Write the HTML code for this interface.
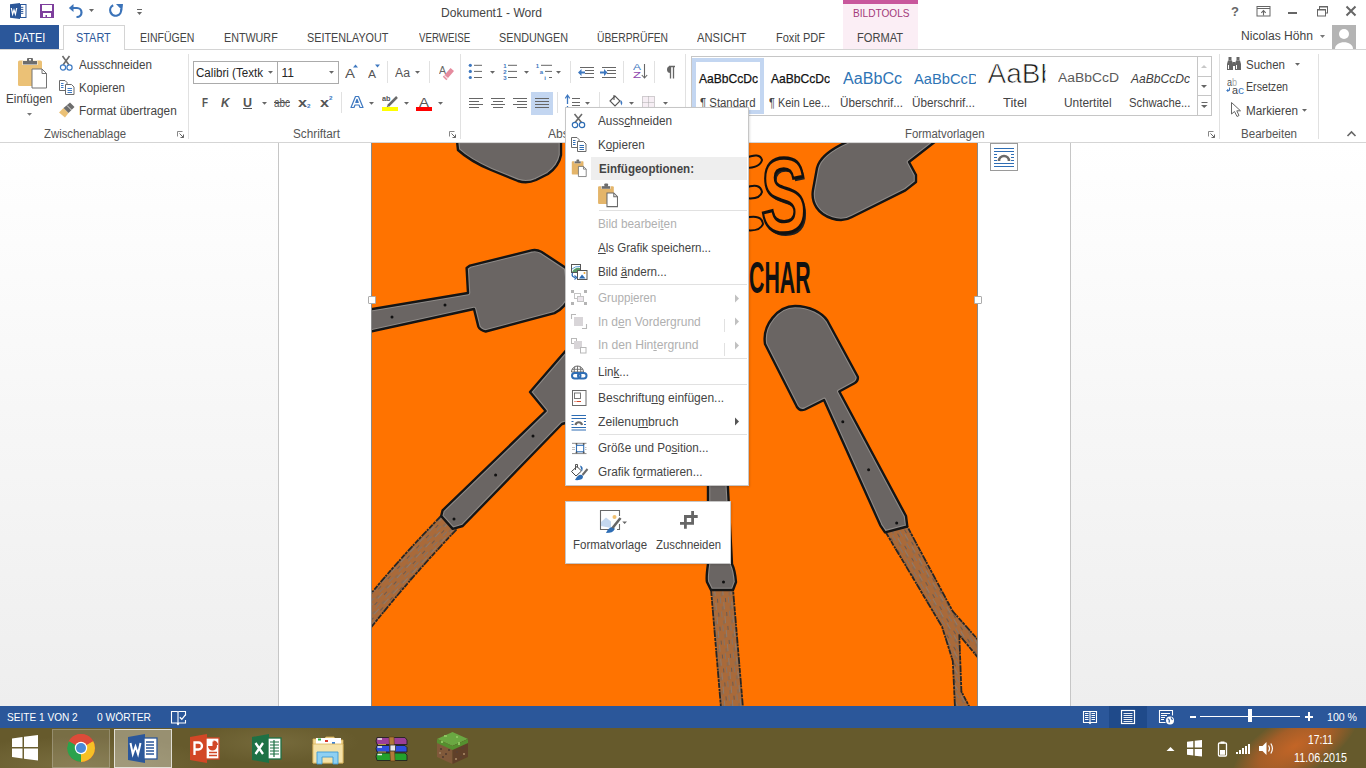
<!DOCTYPE html>
<html><head><meta charset="utf-8">
<style>
*{box-sizing:border-box}
html,body{margin:0;padding:0}
body{width:1366px;height:768px;overflow:hidden;position:relative;background:#fff;font-family:"Liberation Sans",sans-serif;color:#444}
.a{position:absolute}
.t{position:absolute;white-space:nowrap;line-height:1;font-size:12px;transform-origin:0 0}
.t u{text-decoration:underline;text-underline-offset:1px}
svg{position:absolute;overflow:visible}
</style></head><body>
<!-- p1 -->
<svg style="left:9px;top:2px;" width="20" height="19" viewBox="0 0 20 19"><path d="M1 2.2 L11 1 L11 17 L1 15.8 Z" fill="#2b579a"/><rect x="11.5" y="2.5" width="5.5" height="13" fill="#fff" stroke="#2b579a" stroke-width="1"/><path d="M11 5.3h3.3M11 7.4h3.3M11 9.4h3.3M11 11.3h3.3" stroke="#2b579a" stroke-width="1"/><path d="M2.3 6 L3.6 12.2 L5 8 L6.4 12.2 L7.7 6" fill="none" stroke="#fff" stroke-width="1.2"/></svg>
<svg style="left:40px;top:4px;" width="14" height="14" viewBox="0 0 14 14"><path d="M0 0H14V14H0Z" fill="#7e3f9d"/><rect x="2" y="1" width="10" height="6" fill="#fff"/><rect x="3" y="9" width="8" height="4" fill="#fff"/><rect x="5.5" y="11" width="1.5" height="2" fill="#7e3f9d"/></svg>
<svg style="left:68px;top:3px;" width="16" height="15" viewBox="0 0 16 15"><path d="M2 5 H9 A4.5 4.5 0 0 1 9 14 H8.5" fill="none" stroke="#3b73b9" stroke-width="2.2"/><path d="M0.8 5 L5.5 1 L5.5 9 Z" fill="#3b73b9"/></svg>
<svg style="left:89px;top:9px;" width="6" height="4" viewBox="0 0 6 4"><path d="M0 0H5L2.5 3Z" fill="#666"/></svg>
<svg style="left:108px;top:3px;" width="16" height="15" viewBox="0 0 16 15"><path d="M5.2 2.3 A5.5 5.5 0 1 0 13 6" fill="none" stroke="#3b73b9" stroke-width="2.2"/><path d="M8 1 L15 1 L14.3 7.5 Z" fill="#3b73b9"/></svg>
<svg style="left:137px;top:8px;" width="6" height="8" viewBox="0 0 6 8"><path d="M0 1.5H5" stroke="#666" stroke-width="1"/><path d="M0 4H5L2.5 7Z" fill="#666"/></svg>
<div class="t" style="left:441px;top:7px;font-size:12px;color:#444;transform:scaleX(1.005);">Dokument1 - Word</div>
<div class="a" style="left:843px;top:0px;width:75px;height:4px;background:#c8579c;"></div>
<div class="a" style="left:843px;top:4px;width:75px;height:45px;background:#fbeef5;"></div>
<div class="t" style="left:852.5px;top:8px;font-size:11px;color:#a33b7b;transform:scaleX(0.918);">BILDTOOLS</div>
<svg style="left:1230px;top:5px;" width="10" height="12" viewBox="0 0 10 12"><text x="5" y="10.8" text-anchor="middle" font-family="Liberation Sans" font-weight="700" font-size="13" fill="#666">?</text></svg>
<svg style="left:1256px;top:5px;" width="15" height="12" viewBox="0 0 15 12"><rect x="1" y="1.5" width="13" height="9.5" fill="none" stroke="#666" stroke-width="1"/><path d="M1 3.5H14" stroke="#666"/><path d="M7.5 10.5V6M5.3 7.8 L7.5 5.6 L9.7 7.8" fill="none" stroke="#666" stroke-width="1.1"/></svg>
<div class="a" style="left:1288px;top:12px;width:9px;height:2px;background:#666;"></div>
<svg style="left:1316px;top:5px;" width="12" height="12" viewBox="0 0 12 12"><rect x="3.5" y="1.5" width="8" height="6.5" fill="none" stroke="#666"/><rect x="3.5" y="1" width="8" height="1.5" fill="#666"/><rect x="1.5" y="4.5" width="8" height="6.5" fill="#fff" stroke="#666"/><rect x="1.5" y="4" width="8" height="1.5" fill="#666"/></svg>
<svg style="left:1345px;top:5px;" width="12" height="12" viewBox="0 0 12 12"><path d="M1.5 1.5 L10.5 10.5 M10.5 1.5 L1.5 10.5" stroke="#666" stroke-width="2"/></svg>
<div class="a" style="left:0px;top:25px;width:59px;height:25px;background:#2b579a;"></div>
<div class="a" style="left:63px;top:25px;width:62px;height:25px;background:#fff;border:1px solid #d4d4d4;border-bottom:none;box-sizing:border-box"></div>
<div class="a" style="left:0px;top:49px;width:63px;height:1px;background:#d4d4d4;"></div>
<div class="a" style="left:125px;top:49px;width:1241px;height:1px;background:#d4d4d4;"></div>
<div class="a" style="left:843px;top:49px;width:75px;height:1px;background:#d4d4d4;"></div>
<div class="t" style="left:13.5px;top:32px;font-size:12px;color:#fff;transform:scaleX(0.906);">DATEI</div>
<div class="t" style="left:76px;top:32px;font-size:12px;color:#2b579a;transform:scaleX(0.908);">START</div>
<div class="t" style="left:140.3px;top:32px;font-size:12px;color:#444;transform:scaleX(0.876);">EINFÜGEN</div>
<div class="t" style="left:224.3px;top:32px;font-size:12px;color:#444;transform:scaleX(0.895);">ENTWURF</div>
<div class="t" style="left:307px;top:32px;font-size:12px;color:#444;transform:scaleX(0.900);">SEITENLAYOUT</div>
<div class="t" style="left:418.5px;top:32px;font-size:12px;color:#444;transform:scaleX(0.811);">VERWEISE</div>
<div class="t" style="left:499px;top:32px;font-size:12px;color:#444;transform:scaleX(0.900);">SENDUNGEN</div>
<div class="t" style="left:597px;top:32px;font-size:12px;color:#444;transform:scaleX(0.859);">ÜBERPRÜFEN</div>
<div class="t" style="left:696.7px;top:32px;font-size:12px;color:#444;transform:scaleX(0.936);">ANSICHT</div>
<div class="t" style="left:776px;top:32px;font-size:12px;color:#444;transform:scaleX(0.919);">Foxit PDF</div>
<div class="t" style="left:856.5px;top:32px;font-size:12px;color:#444;transform:scaleX(0.926);">FORMAT</div>
<div class="t" style="left:1241px;top:30px;font-size:12px;color:#444;transform:scaleX(1.009);">Nicolas Höhn</div>
<svg style="left:1320px;top:35px;" width="6" height="4" viewBox="0 0 6 4"><path d="M0 0H5L2.5 3Z" fill="#777"/></svg>
<svg style="left:1332px;top:25px;" width="24" height="24" viewBox="0 0 24 24"><rect width="24" height="24" fill="#b4b4b4"/><circle cx="12" cy="9" r="5" fill="#fff"/><path d="M3 24 C3 15 21 15 21 24Z" fill="#fff"/><path d="M6 24 C6 18 18 18 18 24" fill="#fff"/></svg>
<!-- p2 -->
<div class="a" style="left:188px;top:54px;width:1px;height:85px;background:#e1e1e1;"></div>
<div class="a" style="left:460px;top:54px;width:1px;height:85px;background:#e1e1e1;"></div>
<div class="a" style="left:685px;top:54px;width:1px;height:85px;background:#e1e1e1;"></div>
<div class="a" style="left:1219px;top:54px;width:1px;height:85px;background:#e1e1e1;"></div>
<div class="a" style="left:1318px;top:54px;width:1px;height:85px;background:#e1e1e1;"></div>
<div class="t" style="left:44px;top:128px;font-size:12px;color:#555;transform:scaleX(0.946);">Zwischenablage</div>
<div class="t" style="left:293px;top:128px;font-size:12px;color:#555;transform:scaleX(0.979);">Schriftart</div>
<div class="t" style="left:548px;top:128px;font-size:12px;color:#555;transform:scaleX(1.009);">Absatz</div>
<div class="t" style="left:905px;top:128px;font-size:12px;color:#555;transform:scaleX(0.947);">Formatvorlagen</div>
<div class="t" style="left:1241px;top:128px;font-size:12px;color:#555;transform:scaleX(0.965);">Bearbeiten</div>
<svg style="left:177px;top:131px;" width="8" height="8" viewBox="0 0 8 8"><path d="M0.5 0.5H5.5M0.5 0.5V5.5" stroke="#888" fill="none"/><path d="M2.5 2.5L6.5 6.5M3.5 6.5H6.5V3.5" stroke="#666" fill="none" stroke-width="1"/></svg>
<svg style="left:449px;top:131px;" width="8" height="8" viewBox="0 0 8 8"><path d="M0.5 0.5H5.5M0.5 0.5V5.5" stroke="#888" fill="none"/><path d="M2.5 2.5L6.5 6.5M3.5 6.5H6.5V3.5" stroke="#666" fill="none" stroke-width="1"/></svg>
<svg style="left:1208px;top:131px;" width="8" height="8" viewBox="0 0 8 8"><path d="M0.5 0.5H5.5M0.5 0.5V5.5" stroke="#888" fill="none"/><path d="M2.5 2.5L6.5 6.5M3.5 6.5H6.5V3.5" stroke="#666" fill="none" stroke-width="1"/></svg>
<svg style="left:1346px;top:130px;" width="12" height="8" viewBox="0 0 12 8"><path d="M1.5 6 L5.5 2 L9.5 6" fill="none" stroke="#666" stroke-width="1.6"/></svg>
<svg style="left:16px;top:56px;" width="32" height="34" viewBox="0 0 32 34"><rect x="2" y="4.5" width="24" height="25.5" rx="1.5" fill="#ebc176"/><rect x="6.5" y="4.5" width="15" height="4.5" fill="#fff"/><rect x="7" y="5" width="14" height="3.5" fill="#6d6d6d"/><rect x="11" y="2" width="6" height="4" rx="1" fill="#6d6d6d"/><rect x="13" y="3" width="2" height="1.5" fill="#fff"/><path d="M16 13 H26 L30.5 17.5 V32 H16 Z" fill="#fff" stroke="#737373" stroke-width="1"/><path d="M26 13 V17.5 H30.5" fill="none" stroke="#737373" stroke-width="1"/></svg>
<div class="t" style="left:6.4px;top:93px;font-size:12px;color:#444;transform:scaleX(0.975);">Einfügen</div>
<svg style="left:27px;top:113px;" width="6" height="4" viewBox="0 0 6 4"><path d="M0 0H5L2.5 2.8Z" fill="#777"/></svg>
<svg style="left:59px;top:55px;" width="17" height="17" viewBox="0 0 17 17"><path d="M3.5 1 L10 10 M10.5 1 L4 10" stroke="#6a6a6a" stroke-width="1.6"/><circle cx="4" cy="12.5" r="2.6" fill="none" stroke="#3e7bc4" stroke-width="1.2"/><circle cx="10.5" cy="12.5" r="2.6" fill="none" stroke="#3e7bc4" stroke-width="1.2"/></svg>
<div class="t" style="left:78.6px;top:59px;font-size:12px;color:#444;transform:scaleX(0.968);">Ausschneiden</div>
<svg style="left:58px;top:79px;" width="18" height="17" viewBox="0 0 18 17"><path d="M1.5 1.5H7L9 3.5V11.5H1.5Z" fill="#fff" stroke="#6a6a6a"/><path d="M3 4.5H5.5M3 6.5H5.5M3 8.5H5.5" stroke="#3e7bc4"/><path d="M7.5 5.5H13.5L16 8V15.5H7.5Z" fill="#fff" stroke="#6a6a6a"/><path d="M9.5 9.5H14M9.5 11.5H14M9.5 13.5H14" stroke="#3e7bc4"/></svg>
<div class="t" style="left:78.6px;top:82px;font-size:12px;color:#444;transform:scaleX(0.956);">Kopieren</div>
<svg style="left:58px;top:102px;" width="18" height="17" viewBox="0 0 18 17"><path d="M1 10.5 L5.5 6 L10.5 11 L7 15.5 Z" fill="#ebc176"/><path d="M5.5 6 L12 0.5 L16.5 5 L10.5 11 Z" fill="#6d6d6d"/><path d="M9 3.5 L13.5 8" stroke="#fff" stroke-width="0.8"/></svg>
<div class="t" style="left:78.6px;top:105px;font-size:12px;color:#444;transform:scaleX(0.983);">Format übertragen</div>
<div class="a" style="left:193px;top:61px;width:146px;height:23px;background:#fff;border:1px solid #ababab"></div>
<div class="a" style="left:277px;top:61px;width:1px;height:23px;background:#ababab;"></div>
<div class="t" style="left:196.3px;top:67px;font-size:12px;color:#262626;transform:scaleX(0.966);">Calibri (Textk</div>
<svg style="left:268px;top:71px;" width="6" height="4" viewBox="0 0 6 4"><path d="M0 0H5L2.5 2.8Z" fill="#666"/></svg>
<div class="t" style="left:281.5px;top:67px;font-size:12px;color:#262626;">11</div>
<svg style="left:329px;top:71px;" width="6" height="4" viewBox="0 0 6 4"><path d="M0 0H5L2.5 2.8Z" fill="#666"/></svg>
<div class="t" style="left:345px;top:67px;font-size:13px;color:#555;transform:scaleX(1.153);">A</div>
<svg style="left:353px;top:64px;" width="6" height="4" viewBox="0 0 6 4"><path d="M0 3.5H5L2.5 0.5Z" fill="#3e78c0"/></svg>
<div class="t" style="left:368px;top:70px;font-size:10px;color:#555;transform:scaleX(1.199);">A</div>
<svg style="left:375px;top:64px;" width="6" height="4" viewBox="0 0 6 4"><path d="M0 0.5H5L2.5 3.5Z" fill="#3e78c0"/></svg>
<div class="a" style="left:387px;top:61px;width:1px;height:22px;background:#e1e1e1;"></div>
<div class="t" style="left:395px;top:67px;font-size:12px;color:#555;transform:scaleX(1.022);">Aa</div>
<svg style="left:415px;top:71px;" width="6" height="4" viewBox="0 0 6 4"><path d="M0 0H5L2.5 2.8Z" fill="#666"/></svg>
<div class="a" style="left:429px;top:61px;width:1px;height:22px;background:#e1e1e1;"></div>
<div class="t" style="left:438.5px;top:66px;font-size:10px;color:#666;transform:scaleX(1.049);">A</div>
<svg style="left:440px;top:65px;" width="14" height="16" viewBox="0 0 14 16"><path d="M4.5 10 L10.5 3 L14 6 L8 13 Z" fill="#e58b9e"/><path d="M3.5 11 L7 14.5" stroke="#e58b9e" stroke-width="2"/><path d="M4 10.5 L7.5 14" stroke="#fff" stroke-width="0.7"/></svg>
<div class="t" style="left:201.5px;top:97px;font-size:12px;color:#555;font-weight:700;transform:scaleX(0.819);">F</div>
<div class="t" style="left:221px;top:97px;font-size:12px;color:#555;font-weight:700;font-style:italic;transform:scaleX(0.981);">K</div>
<div class="t" style="left:243px;top:97px;font-size:12px;color:#555;font-weight:700;transform:scaleX(1.039);">U</div>
<div class="a" style="left:243px;top:108px;width:9px;height:1px;background:#555;"></div>
<svg style="left:262px;top:102px;" width="6" height="4" viewBox="0 0 6 4"><path d="M0 0H5L2.5 2.8Z" fill="#666"/></svg>
<div class="t" style="left:274px;top:97px;font-size:12px;color:#555;transform:scaleX(0.827);">abc</div>
<div class="a" style="left:274px;top:102px;width:16px;height:1px;background:#555;"></div>
<div class="t" style="left:298px;top:96px;font-size:13px;color:#555;font-weight:700;transform:scaleX(1.245);">x</div>
<div class="t" style="left:307px;top:103px;font-size:6px;color:#3e78c0;font-weight:700;transform:scaleX(1.049);">2</div>
<div class="t" style="left:320px;top:96px;font-size:13px;color:#555;font-weight:700;transform:scaleX(1.245);">x</div>
<div class="t" style="left:329px;top:95px;font-size:6px;color:#3e78c0;font-weight:700;transform:scaleX(1.049);">2</div>
<div class="a" style="left:341px;top:92px;width:1px;height:21px;background:#e1e1e1;"></div>
<svg style="left:349px;top:95px;" width="16" height="14" viewBox="0 0 16 14"><path d="M2 12.5 L6.5 1.5 H9.5 L14 12.5 H11 L10 10 H6 L5 12.5 Z M6.8 7.5 H9.2 L8 4.3 Z" fill="#fff" stroke="#3e78c0" stroke-width="1.2" stroke-linejoin="round"/></svg>
<svg style="left:369px;top:102px;" width="6" height="4" viewBox="0 0 6 4"><path d="M0 0H5L2.5 2.8Z" fill="#666"/></svg>
<div class="t" style="left:382px;top:95px;font-size:8px;color:#555;font-weight:700;transform:scaleX(0.910);">ab</div>
<svg style="left:385px;top:95px;" width="14" height="12" viewBox="0 0 14 12"><path d="M3 11 L12 2" stroke="#6a6a6a" stroke-width="2.5"/><path d="M2 12 L4 9.5" stroke="#6a6a6a" stroke-width="1"/></svg>
<div class="a" style="left:382px;top:107px;width:16px;height:4px;background:#ffff00;"></div>
<svg style="left:404px;top:102px;" width="6" height="4" viewBox="0 0 6 4"><path d="M0 0H5L2.5 2.8Z" fill="#666"/></svg>
<div class="t" style="left:419px;top:96px;font-size:13px;color:#555;transform:scaleX(1.153);">A</div>
<div class="a" style="left:416px;top:107px;width:16px;height:4px;background:#ff0000;"></div>
<svg style="left:438px;top:102px;" width="6" height="4" viewBox="0 0 6 4"><path d="M0 0H5L2.5 2.8Z" fill="#666"/></svg>
<svg style="left:467px;top:62px;" width="18" height="18" viewBox="0 0 18 18"><circle cx="3.3" cy="3.3" r="1.6" fill="#3e78c0"/><circle cx="3.3" cy="9.4" r="1.6" fill="#3e78c0"/><circle cx="3.3" cy="15.5" r="1.6" fill="#3e78c0"/><path d="M7 3.3H15M7 9.4H15M7 15.5H15" stroke="#666" stroke-width="1"/></svg>
<svg style="left:490px;top:71px;" width="6" height="4" viewBox="0 0 6 4"><path d="M0 0H5L2.5 2.8Z" fill="#666"/></svg>
<svg style="left:501px;top:62px;" width="18" height="18" viewBox="0 0 18 18"><text x="4" y="6" text-anchor="middle" font-family="Liberation Sans" font-weight="700" font-size="6" fill="#3e78c0">1</text><text x="4" y="12" text-anchor="middle" font-family="Liberation Sans" font-weight="700" font-size="6" fill="#3e78c0">2</text><text x="4" y="18" text-anchor="middle" font-family="Liberation Sans" font-weight="700" font-size="6" fill="#3e78c0">3</text><path d="M7 3.3H16M7 9.4H16M7 15.5H16" stroke="#666" stroke-width="1"/></svg>
<svg style="left:524px;top:71px;" width="6" height="4" viewBox="0 0 6 4"><path d="M0 0H5L2.5 2.8Z" fill="#666"/></svg>
<svg style="left:534px;top:62px;" width="20" height="18" viewBox="0 0 20 18"><text x="3.5" y="6" text-anchor="middle" font-family="Liberation Sans" font-weight="700" font-size="6" fill="#3e78c0">1</text><text x="7.5" y="11.5" text-anchor="middle" font-family="Liberation Sans" font-weight="700" font-size="6" fill="#3e78c0">a</text><text x="11" y="17.5" text-anchor="middle" font-family="Liberation Sans" font-weight="700" font-size="6" fill="#3e78c0">i</text><path d="M7 3.3H18M11 9.4H18M15 15.5H18" stroke="#666" stroke-width="1"/></svg>
<svg style="left:556px;top:71px;" width="6" height="4" viewBox="0 0 6 4"><path d="M0 0H5L2.5 2.8Z" fill="#666"/></svg>
<div class="a" style="left:570px;top:61px;width:1px;height:22px;background:#e1e1e1;"></div>
<svg style="left:577px;top:64px;" width="18" height="15" viewBox="0 0 18 15"><path d="M3 3.5H17M8 6.5H17M8 9.5H17M3 13.5H17" stroke="#666" stroke-width="1"/><path d="M1 8.5 L4.5 5 V7.5 H8 V9.5 H4.5 V12 Z" fill="#3e78c0"/></svg>
<svg style="left:599px;top:64px;" width="18" height="15" viewBox="0 0 18 15"><path d="M3 3.5H17M8 6.5H17M8 9.5H17M3 13.5H17" stroke="#666" stroke-width="1"/><path d="M8.5 8.5 L5 5 V7.5 H1 V9.5 H5 V12 Z" fill="#3e78c0"/></svg>
<div class="a" style="left:623px;top:61px;width:1px;height:22px;background:#e1e1e1;"></div>
<div class="t" style="left:633px;top:63px;font-size:9px;color:#3e78c0;transform:scaleX(1.333);">A</div>
<div class="t" style="left:633px;top:71px;font-size:9px;color:#8e44ad;transform:scaleX(1.455);">Z</div>
<svg style="left:641px;top:63px;" width="8" height="17" viewBox="0 0 8 17"><path d="M3.5 1V15M0.8 12 L3.5 15 L6.2 12" fill="none" stroke="#666" stroke-width="1.1"/></svg>
<div class="a" style="left:654px;top:61px;width:1px;height:22px;background:#e1e1e1;"></div>
<svg style="left:663px;top:65px;" width="13" height="14" viewBox="0 0 13 14"><path d="M6 1.5 H12 M7.5 1.5 V13.5 M10.5 1.5 V13.5" stroke="#666" stroke-width="1.3"/><path d="M7.5 1 A3.2 3.2 0 0 0 7.5 8 Z" fill="#666"/></svg>
<svg style="left:469px;top:96px;" width="16" height="14" viewBox="0 0 16 14"><path d="M0 2.5H14" stroke="#666" stroke-width="1"/><path d="M0 5.5H10" stroke="#666" stroke-width="1"/><path d="M0 8.5H14" stroke="#666" stroke-width="1"/><path d="M0 11.5H10" stroke="#666" stroke-width="1"/></svg>
<svg style="left:491px;top:96px;" width="16" height="14" viewBox="0 0 16 14"><path d="M0 2.5H14" stroke="#666" stroke-width="1"/><path d="M2 5.5H12" stroke="#666" stroke-width="1"/><path d="M0 8.5H14" stroke="#666" stroke-width="1"/><path d="M2 11.5H12" stroke="#666" stroke-width="1"/></svg>
<svg style="left:513px;top:96px;" width="16" height="14" viewBox="0 0 16 14"><path d="M0 2.5H14" stroke="#666" stroke-width="1"/><path d="M4 5.5H14" stroke="#666" stroke-width="1"/><path d="M0 8.5H14" stroke="#666" stroke-width="1"/><path d="M4 11.5H14" stroke="#666" stroke-width="1"/></svg>
<div class="a" style="left:531px;top:92px;width:22px;height:23px;background:#c3d6f1;"></div>
<svg style="left:535px;top:96px;" width="16" height="14" viewBox="0 0 16 14"><path d="M0 2.5H14" stroke="#666" stroke-width="1"/><path d="M0 5.5H14" stroke="#666" stroke-width="1"/><path d="M0 8.5H14" stroke="#666" stroke-width="1"/><path d="M0 11.5H14" stroke="#666" stroke-width="1"/></svg>
<div class="a" style="left:557px;top:92px;width:1px;height:21px;background:#e1e1e1;"></div>
<svg style="left:565px;top:94px;" width="26" height="16" viewBox="0 0 26 16"><path d="M2.5 2V14" stroke="#3e78c0" stroke-width="1.3" stroke-dasharray="8 2 4"/><path d="M0.3 4.3 L2.5 1 L4.7 4.3" fill="none" stroke="#3e78c0" stroke-width="1.2"/><path d="M7 4.5H15M7 8.5H15M7 11.5H15" stroke="#666" stroke-width="1"/></svg>
<svg style="left:585px;top:102px;" width="6" height="4" viewBox="0 0 6 4"><path d="M0 0H5L2.5 2.8Z" fill="#666"/></svg>
<div class="a" style="left:599px;top:92px;width:1px;height:21px;background:#e1e1e1;"></div>
<svg style="left:608px;top:94px;" width="18" height="15" viewBox="0 0 18 15"><path d="M2 7 L7 2 L12 7 L7 12 Z" fill="#fff" stroke="#555" stroke-width="1.1"/><path d="M6 6V1" stroke="#555" stroke-width="1.1"/><path d="M12.5 6 Q15.5 8 13.5 11.5 Q12 9.5 12.5 6Z" fill="#3e78c0"/></svg>
<svg style="left:629px;top:102px;" width="6" height="4" viewBox="0 0 6 4"><path d="M0 0H5L2.5 2.8Z" fill="#666"/></svg>
<svg style="left:641px;top:95px;" width="16" height="14" viewBox="0 0 16 14"><rect x="1" y="1" width="13" height="12" fill="#f6eef4"/><path d="M1.5 1.5H13.5V12.5H1.5Z M7.5 1.5V12.5 M1.5 7.5H13.5" fill="none" stroke="#aaa" stroke-width="1" stroke-dasharray="1 1"/></svg>
<svg style="left:663px;top:102px;" width="6" height="4" viewBox="0 0 6 4"><path d="M0 0H5L2.5 2.8Z" fill="#666"/></svg>
<div class="a" style="left:691px;top:56px;width:521px;height:60px;background:#fff;border:1px solid #c6c6c6"></div>
<div class="a" style="left:1197px;top:56px;width:15px;height:60px;background:#fff;border:1px solid #c6c6c6"></div>
<div class="a" style="left:1197px;top:76px;width:15px;height:1px;background:#c6c6c6;"></div>
<div class="a" style="left:1197px;top:95px;width:15px;height:1px;background:#c6c6c6;"></div>
<svg style="left:1201px;top:64px;" width="8" height="5" viewBox="0 0 8 5"><path d="M0 4H6L3 1Z" fill="#c8c8c8"/></svg>
<svg style="left:1201px;top:84px;" width="8" height="5" viewBox="0 0 8 5"><path d="M0 1H6L3 4Z" fill="#666"/></svg>
<svg style="left:1201px;top:101px;" width="8" height="8" viewBox="0 0 8 8"><path d="M0.5 1.5H6.5" stroke="#666"/><path d="M0 4H6.5L3.2 7Z" fill="#666"/></svg>
<div class="a" style="left:692px;top:58px;width:72px;height:56px;background:transparent;border:4px solid #c3d6f1"></div>
<div class="a" style="left:695px;top:60px;width:62.5px;height:32px;overflow:hidden"><div class="t" style="left:3.7999999999999545px;top:12px;font-size:13px;color:#111;transform:scaleX(0.929);-webkit-text-stroke:0.25px currentColor;">AaBbCcDc</div>
</div>
<div class="a" style="left:766px;top:60px;width:63.5px;height:32px;overflow:hidden"><div class="t" style="left:4.7000000000000455px;top:12px;font-size:13px;color:#111;transform:scaleX(0.929);-webkit-text-stroke:0.25px currentColor;">AaBbCcDc</div>
</div>
<div class="a" style="left:838px;top:60px;width:63.5px;height:32px;overflow:hidden"><div class="t" style="left:5px;top:11px;font-size:16px;color:#2e74b5;transform:scaleX(1.006);">AaBbCcDc</div>
</div>
<div class="a" style="left:910px;top:60px;width:65.5px;height:32px;overflow:hidden"><div class="t" style="left:4px;top:12px;font-size:14px;color:#2e74b5;transform:scaleX(1.051);">AaBbCcDc</div>
</div>
<div class="a" style="left:980px;top:64px;width:66px;height:28px;overflow:hidden"><div class="t" style="left:7.5px;top:-4px;font-size:28px;color:#1a1a1a;-webkit-text-stroke:0.7px #fff;">AaBbCc</div>
</div>
<div class="a" style="left:1054px;top:60px;width:64.5px;height:32px;overflow:hidden"><div class="t" style="left:4px;top:12px;font-size:12.5px;color:#5a5a5a;transform:scaleX(1.112);">AaBbCcDc</div>
</div>
<div class="a" style="left:1127px;top:60px;width:62.5px;height:32px;overflow:hidden"><div class="t" style="left:4px;top:12px;font-size:13px;color:#404040;font-style:italic;transform:scaleX(0.929);">AaBbCcDc</div>
</div>
<div class="t" style="left:700px;top:97px;font-size:12px;color:#444;transform:scaleX(0.949);">¶ Standard</div>
<div class="t" style="left:769px;top:97px;font-size:12px;color:#444;transform:scaleX(0.908);">¶ Kein Lee...</div>
<div class="t" style="left:840px;top:97px;font-size:12px;color:#444;transform:scaleX(0.974);">Überschrif...</div>
<div class="t" style="left:912px;top:97px;font-size:12px;color:#444;transform:scaleX(0.974);">Überschrif...</div>
<div class="t" style="left:1003px;top:97px;font-size:12px;color:#444;transform:scaleX(1.080);">Titel</div>
<div class="t" style="left:1064px;top:97px;font-size:12px;color:#444;transform:scaleX(0.991);">Untertitel</div>
<div class="t" style="left:1129.4px;top:97px;font-size:12px;color:#444;transform:scaleX(0.939);">Schwache...</div>
<svg style="left:1226px;top:56px;" width="17" height="15" viewBox="0 0 17 15"><path d="M2.5 1h3v3.5h-3z M10.5 1h3v3.5h-3z" fill="#666"/><path d="M1 14 V8 L2 4.5 H6 L7 8 V14 Z M9 14 V8 L10 4.5 H14 L15 8 V14 Z" fill="#666"/><path d="M6.5 6H9.5V10H6.5Z" fill="#666"/><path d="M2.5 9V13M10.5 9V13" stroke="#fff" stroke-width="1"/></svg>
<div class="t" style="left:1246px;top:59px;font-size:12px;color:#444;transform:scaleX(0.958);">Suchen</div>
<svg style="left:1295px;top:63px;" width="6" height="4" viewBox="0 0 6 4"><path d="M0 0H5L2.5 2.8Z" fill="#666"/></svg>
<div class="t" style="left:1226.5px;top:78px;font-size:10px;color:#555;transform:scaleX(0.899);">a</div>
<div class="t" style="left:1232px;top:78px;font-size:10px;color:#aaa;transform:scaleX(0.899);">b</div>
<div class="t" style="left:1231.5px;top:85px;font-size:11px;color:#444;transform:scaleX(0.981);">a</div>
<div class="t" style="left:1237.5px;top:85px;font-size:11px;color:#3e78c0;transform:scaleX(1.091);">c</div>
<svg style="left:1226px;top:87px;" width="5" height="6" viewBox="0 0 5 6"><path d="M3.5 0.5V3.5H1 M2.3 2 L0.8 3.5 L2.3 5" fill="none" stroke="#3e78c0" stroke-width="1"/></svg>
<div class="t" style="left:1246px;top:81px;font-size:12px;color:#444;transform:scaleX(0.887);">Ersetzen</div>
<svg style="left:1230px;top:101px;" width="12" height="17" viewBox="0 0 12 17"><path d="M1.5 1.5 V13 L4.5 10.5 L7 15.5 L9 14.5 L6.8 9.8 H10.5 Z" fill="#fff" stroke="#666" stroke-width="1"/></svg>
<div class="t" style="left:1246px;top:105px;font-size:12px;color:#444;transform:scaleX(0.975);">Markieren</div>
<svg style="left:1302px;top:109px;" width="6" height="4" viewBox="0 0 6 4"><path d="M0 0H5L2.5 2.8Z" fill="#666"/></svg>
<!-- p3 -->
<div class="a" style="left:0px;top:142px;width:1366px;height:1px;background:#d5d5d5;"></div>
<div class="a" style="left:0px;top:143px;width:1366px;height:563px;background:linear-gradient(#ffffff,#eeeeee);"></div>
<div class="a" style="left:278px;top:143px;width:793px;height:563px;background:#fff;border-left:1px solid #c6c6c6;border-right:1px solid #c6c6c6"></div>
<div class="a" style="left:371px;top:143px;width:607px;height:563px;overflow:hidden"><svg style="left:0;top:0" width="607" height="563" viewBox="371 143 607 563"><rect x="371" y="143" width="607" height="563" fill="#ff7300"/><defs><pattern id="woodC" width="8" height="14" patternUnits="userSpaceOnUse" patternTransform="rotate(43)"><rect width="8" height="14" fill="#a96a3a"/><rect x="1" y="0" width="1" height="6" fill="#857368"/><rect x="4" y="5" width="1" height="7" fill="#8d7a6c"/><rect x="6" y="1" width="1" height="4" fill="#6a5a50"/><rect x="2.5" y="9" width="1" height="4" fill="#7a6a5e"/></pattern><pattern id="woodD" width="8" height="14" patternUnits="userSpaceOnUse" patternTransform="rotate(-5)"><rect width="8" height="14" fill="#a96a3a"/><rect x="1" y="0" width="1" height="6" fill="#857368"/><rect x="4" y="5" width="1" height="7" fill="#8d7a6c"/><rect x="6" y="1" width="1" height="4" fill="#6a5a50"/><rect x="2.5" y="9" width="1" height="4" fill="#7a6a5e"/></pattern><pattern id="woodE" width="8" height="14" patternUnits="userSpaceOnUse" patternTransform="rotate(-30)"><rect width="8" height="14" fill="#a96a3a"/><rect x="1" y="0" width="1" height="6" fill="#857368"/><rect x="4" y="5" width="1" height="7" fill="#8d7a6c"/><rect x="6" y="1" width="1" height="4" fill="#6a5a50"/><rect x="2.5" y="9" width="1" height="4" fill="#7a6a5e"/></pattern></defs><clipPath id="bc1"><path d="M457 141 L458 150 Q470 161 491 170 L518 181 Q527 184 536 180 L548 174 Q559 166 561 155 L561 141 Z"/></clipPath><path d="M457 141 L458 150 Q470 161 491 170 L518 181 Q527 184 536 180 L548 174 Q559 166 561 155 L561 141 Z" fill="#6a6563"/><path d="M457 141 L458 150 Q470 161 491 170 L518 181 Q527 184 536 180 L548 174 Q559 166 561 155 L561 141 Z" fill="none" stroke="#8e8a87" stroke-width="4.6" clip-path="url(#bc1)" stroke-linejoin="round"/><path d="M457 141 L458 150 Q470 161 491 170 L518 181 Q527 184 536 180 L548 174 Q559 166 561 155 L561 141 Z" fill="none" stroke="#151515" stroke-width="2.4" stroke-linejoin="round"/><clipPath id="bc2"><path d="M369 309.5 L468 293 L466.6 268 L470 265.6 L532.5 250.2 Q537 249.5 541.3 251.7 L566 268 L570 296 Q565 308 554.5 313.2 L485.7 331.5 Q480 330 478.3 326.4 L474 309 L369 332 Z"/></clipPath><path d="M369 309.5 L468 293 L466.6 268 L470 265.6 L532.5 250.2 Q537 249.5 541.3 251.7 L566 268 L570 296 Q565 308 554.5 313.2 L485.7 331.5 Q480 330 478.3 326.4 L474 309 L369 332 Z" fill="#6a6563"/><path d="M369 309.5 L468 293 L466.6 268 L470 265.6 L532.5 250.2 Q537 249.5 541.3 251.7 L566 268 L570 296 Q565 308 554.5 313.2 L485.7 331.5 Q480 330 478.3 326.4 L474 309 L369 332 Z" fill="none" stroke="#8e8a87" stroke-width="4.6" clip-path="url(#bc2)" stroke-linejoin="round"/><path d="M369 309.5 L468 293 L466.6 268 L470 265.6 L532.5 250.2 Q537 249.5 541.3 251.7 L566 268 L570 296 Q565 308 554.5 313.2 L485.7 331.5 Q480 330 478.3 326.4 L474 309 L369 332 Z" fill="none" stroke="#151515" stroke-width="2.4" stroke-linejoin="round"/><circle cx="392" cy="317" r="1.5" fill="#111"/><circle cx="445" cy="305" r="1.5" fill="#111"/><path d="M441 516 Q402 556 369 596 L369 630 Q412 576 457 529 Z" fill="url(#woodC)" stroke="#262626" stroke-width="1.8" stroke-linejoin="round" stroke-dasharray="7 1 3 0.8 5 1.2 2 0.6"/><clipPath id="bc3"><path d="M575 340 L530 392 L545.6 411 L442.6 510.3 L441.2 516 L452.7 528.9 L462.7 526 L562 424 L575 420 Z"/></clipPath><path d="M575 340 L530 392 L545.6 411 L442.6 510.3 L441.2 516 L452.7 528.9 L462.7 526 L562 424 L575 420 Z" fill="#6a6563"/><path d="M575 340 L530 392 L545.6 411 L442.6 510.3 L441.2 516 L452.7 528.9 L462.7 526 L562 424 L575 420 Z" fill="none" stroke="#8e8a87" stroke-width="4.6" clip-path="url(#bc3)" stroke-linejoin="round"/><path d="M575 340 L530 392 L545.6 411 L442.6 510.3 L441.2 516 L452.7 528.9 L462.7 526 L562 424 L575 420 Z" fill="none" stroke="#151515" stroke-width="2.4" stroke-linejoin="round"/><circle cx="533" cy="436" r="1.5" fill="#111"/><circle cx="495.6" cy="475" r="1.5" fill="#111"/><circle cx="454" cy="519" r="1.5" fill="#111"/><path d="M711 589 L721 708 L743 708 L733 589 Z" fill="url(#woodD)" stroke="#262626" stroke-width="1.8" stroke-linejoin="round" stroke-dasharray="7 1 3 0.8 5 1.2 2 0.6"/><clipPath id="bc4"><path d="M708 470 L708 564 Q706 578 707 582 L711 590 L733 590 L736 582 Q735 570 732 564 L727 470 Z"/></clipPath><path d="M708 470 L708 564 Q706 578 707 582 L711 590 L733 590 L736 582 Q735 570 732 564 L727 470 Z" fill="#6a6563"/><path d="M708 470 L708 564 Q706 578 707 582 L711 590 L733 590 L736 582 Q735 570 732 564 L727 470 Z" fill="none" stroke="#8e8a87" stroke-width="4.6" clip-path="url(#bc4)" stroke-linejoin="round"/><path d="M708 470 L708 564 Q706 578 707 582 L711 590 L733 590 L736 582 Q735 570 732 564 L727 470 Z" fill="none" stroke="#151515" stroke-width="2.4" stroke-linejoin="round"/><circle cx="723.5" cy="582" r="1.5" fill="#111"/><clipPath id="bc5"><path d="M849 141 C835 147 820 156 817 168 L812.9 190.4 C811 203 818 214 832 218.5 C840 221 847 220 852 217 L905.4 190.4 L916 182 L916 175 L909 162 L936 141 Z"/></clipPath><path d="M849 141 C835 147 820 156 817 168 L812.9 190.4 C811 203 818 214 832 218.5 C840 221 847 220 852 217 L905.4 190.4 L916 182 L916 175 L909 162 L936 141 Z" fill="#6a6563"/><path d="M849 141 C835 147 820 156 817 168 L812.9 190.4 C811 203 818 214 832 218.5 C840 221 847 220 852 217 L905.4 190.4 L916 182 L916 175 L909 162 L936 141 Z" fill="none" stroke="#8e8a87" stroke-width="4.6" clip-path="url(#bc5)" stroke-linejoin="round"/><path d="M849 141 C835 147 820 156 817 168 L812.9 190.4 C811 203 818 214 832 218.5 C840 221 847 220 852 217 L905.4 190.4 L916 182 L916 175 L909 162 L936 141 Z" fill="none" stroke="#151515" stroke-width="2.4" stroke-linejoin="round"/><path d="M885 531 L942 626.6 L952.8 661 L955 708 L970 708 L961.4 691.5 L959.3 635 L980 660 L980 642 L952.8 611.4 L907.3 526.5 Z" fill="url(#woodE)" stroke="#262626" stroke-width="1.8" stroke-linejoin="round" stroke-dasharray="7 1 3 0.8 5 1.2 2 0.6"/><clipPath id="bc6"><path d="M765 344 C762 325 778 306 795 306 C810 306 822 313 827.3 320.5 L857.8 376.7 Q858.5 381 854 383.5 L839.3 391.5 L906 516 L907.3 526.5 L885 532.3 L880.3 525.3 L824 400 L805 409.5 Q800 411.5 797 407 Z"/></clipPath><path d="M765 344 C762 325 778 306 795 306 C810 306 822 313 827.3 320.5 L857.8 376.7 Q858.5 381 854 383.5 L839.3 391.5 L906 516 L907.3 526.5 L885 532.3 L880.3 525.3 L824 400 L805 409.5 Q800 411.5 797 407 Z" fill="#6a6563"/><path d="M765 344 C762 325 778 306 795 306 C810 306 822 313 827.3 320.5 L857.8 376.7 Q858.5 381 854 383.5 L839.3 391.5 L906 516 L907.3 526.5 L885 532.3 L880.3 525.3 L824 400 L805 409.5 Q800 411.5 797 407 Z" fill="none" stroke="#8e8a87" stroke-width="4.6" clip-path="url(#bc6)" stroke-linejoin="round"/><path d="M765 344 C762 325 778 306 795 306 C810 306 822 313 827.3 320.5 L857.8 376.7 Q858.5 381 854 383.5 L839.3 391.5 L906 516 L907.3 526.5 L885 532.3 L880.3 525.3 L824 400 L805 409.5 Q800 411.5 797 407 Z" fill="none" stroke="#151515" stroke-width="2.4" stroke-linejoin="round"/><circle cx="842.8" cy="421.7" r="1.5" fill="#111"/><circle cx="868.6" cy="469.8" r="1.5" fill="#111"/><circle cx="896.7" cy="523" r="1.5" fill="#111"/><text x="0" y="0" transform="translate(763 235) scale(0.98 1.5)" font-family="Liberation Sans" font-weight="700" font-size="70" fill="#222">S</text><text x="0" y="0" transform="translate(761 232) scale(0.98 1.5)" font-family="Liberation Sans" font-weight="700" font-size="70" fill="#ff7300" stroke="#111" stroke-width="2.2">S</text><path d="M745 158 Q760 152 762 160 Q760 168 745 168 M745 188 Q760 182 762 192 Q760 200 745 198 M745 218 Q762 214 763 224 Q760 232 745 230" fill="#ff7300" stroke="#111" stroke-width="2"/><text x="0" y="0" transform="translate(749 293) scale(0.52 1.1)" font-family="Liberation Sans" font-weight="700" font-size="41" fill="#111">CHAR</text></svg></div>
<div class="a" style="left:371px;top:143px;width:1px;height:563px;background:#8a8a8a;"></div>
<div class="a" style="left:977px;top:143px;width:1px;height:563px;background:#8a8a8a;"></div>
<div class="a" style="left:368px;top:296px;width:8px;height:8px;background:#fff;border:1px solid #acacac;border-radius:1px"></div>
<div class="a" style="left:974px;top:296px;width:8px;height:8px;background:#fff;border:1px solid #acacac;border-radius:1px"></div>
<svg style="left:990px;top:143px;" width="28" height="28" viewBox="0 0 28 28"><rect x="0.5" y="0.5" width="27" height="27" fill="#fff" stroke="#9a9a9a"/><path d="M4 5.5H24M4 8.5H24M4 20.5H24M4 23.5H24" stroke="#2e6db4" stroke-width="1.1"/><path d="M4 11.5H7M4 14.5H7M4 17.5H7M21 11.5H24M21 14.5H24M21 17.5H24" stroke="#2e6db4" stroke-width="1.1"/><path d="M9 18 A5 5 0 0 1 19 18" fill="none" stroke="#6a6a6a" stroke-width="2.6"/></svg>
<!-- p4 -->
<div class="a" style="left:0px;top:706px;width:1366px;height:22px;background:#2b579a;"></div>
<div class="t" style="left:7px;top:712px;font-size:11px;color:#fff;transform:scaleX(0.918);">SEITE 1 VON 2</div>
<div class="t" style="left:97px;top:712px;font-size:11px;color:#fff;transform:scaleX(0.933);">0 WÖRTER</div>
<svg style="left:170px;top:709px;" width="17" height="17" viewBox="0 0 17 17"><path d="M8 3 L7 2.5 H1.5 V14 H7 L8 15 L9 14 H15.5 V11 M15.5 6.5 V2.5 H9 L8 3 V15" fill="none" stroke="#fff" stroke-width="1.1"/><path d="M9.8 8.3 L11.8 10.3 L15.8 5.3" fill="none" stroke="#fff" stroke-width="1.3"/><path d="M6.8 15 L8 16.5 L9.2 15Z" fill="#fff"/></svg>
<div class="a" style="left:1109px;top:706px;width:38px;height:22px;background:#1f4a8a;"></div>
<svg style="left:1082px;top:709px;" width="16" height="16" viewBox="0 0 16 16"><path d="M1.5 2.5H14.5V13.5H9L8 14.5L7 13.5H1.5Z M8 3V14" fill="none" stroke="#fff" stroke-width="1.1"/><path d="M3 4.5H6.5M3 6.5H6.5M3 8.5H6.5M3 10.5H6.5M9.5 4.5H13M9.5 6.5H13M9.5 8.5H13M9.5 10.5H13" stroke="#fff" stroke-width="1"/></svg>
<svg style="left:1120px;top:709px;" width="16" height="16" viewBox="0 0 16 16"><rect x="1.5" y="1.5" width="13" height="13" fill="none" stroke="#fff" stroke-width="1.2"/><path d="M3.5 4.5H12.5M3.5 6.5H12.5M3.5 8.5H12.5M3.5 10.5H12.5M3.5 12.5H12.5" stroke="#fff" stroke-width="0.9"/></svg>
<svg style="left:1158px;top:709px;" width="17" height="16" viewBox="0 0 17 16"><path d="M7.5 13.5H1.5V1.5H14.5V6.5" fill="none" stroke="#fff" stroke-width="1.1"/><path d="M3 4.5H12M3 6.5H9M3 8.5H7M3 10.5H6" stroke="#fff" stroke-width="1"/><circle cx="12" cy="11.5" r="4" fill="#fff"/><path d="M9.8 9.8 Q12 10.5 11 13.5 M13 8.5 L14.5 11" stroke="#2b579a" stroke-width="1.2" fill="none"/></svg>
<div class="a" style="left:1190px;top:716px;width:6px;height:2px;background:#fff;"></div>
<div class="a" style="left:1200px;top:716px;width:100px;height:1px;background:#fff;"></div>
<div class="a" style="left:1248px;top:709px;width:4px;height:13px;background:#fff;"></div>
<div class="a" style="left:1305px;top:716px;width:8px;height:2px;background:#fff;"></div>
<div class="a" style="left:1308px;top:712px;width:2px;height:9px;background:#fff;"></div>
<div class="t" style="left:1327px;top:712px;font-size:11px;color:#fff;transform:scaleX(0.962);">100 %</div>
<div class="a" style="left:0px;top:728px;width:1366px;height:40px;background:#665a2c;"></div>
<div class="a" style="left:0;top:728px;width:1366px;height:40px;overflow:hidden"><div class="a" style="left:-60px;top:8px;width:280px;height:60px;border-radius:50%;background:radial-gradient(ellipse at center,rgba(180,170,120,0.25),rgba(0,0,0,0) 70%)"></div><div class="a" style="left:190px;top:-8px;width:170px;height:44px;border-radius:50%;background:radial-gradient(ellipse at center,rgba(175,165,115,0.22),rgba(0,0,0,0) 70%)"></div><div class="a" style="left:1225px;top:-12px;width:140px;height:60px;border-radius:50%;transform:rotate(-30deg);background:radial-gradient(ellipse at center,rgba(205,102,38,0.9),rgba(190,95,38,0.7) 40%,rgba(150,90,40,0) 72%)"></div></div><svg style="left:12px;top:735px;" width="27" height="26" viewBox="0 0 27 26"><path d="M0 3.5 L10.5 2 V12 H0Z M12 1.8 L26 0 V12 H12Z M0 13.5 H10.5 V23.5 L0 22Z M12 13.5 H26 V25.5 L12 23.7Z" fill="#fff"/></svg>
<div class="a" style="left:52px;top:729px;width:58px;height:39px;background:rgba(255,255,255,0.12);border:1px solid rgba(255,255,255,0.22)"></div>
<svg style="left:66px;top:733px;" width="30" height="30" viewBox="0 0 30 30"><circle cx="15" cy="15" r="14" fill="#dd4b39"/><path d="M15 15 L27.1 8 A14 14 0 0 1 15 29 Z" fill="#f6c026"/><path d="M15 15 L15 29 A14 14 0 0 1 2.9 8 Z" fill="#2ba24c"/><path d="M15 15 L2.9 8 A14 14 0 0 1 27.1 8 Z" fill="#dd4b39"/><circle cx="15" cy="15" r="6.2" fill="#fff"/><circle cx="15" cy="15" r="5" fill="#4a8ad8"/></svg>
<div class="a" style="left:114px;top:729px;width:58px;height:39px;background:rgba(255,255,255,0.33);border:1px solid rgba(255,255,255,0.7)"></div>
<svg style="left:127px;top:733px;" width="32" height="31" viewBox="0 0 32 31"><path d="M1 4 L18 1 V30 L1 27Z" fill="#2b579a"/><rect x="17" y="5" width="13" height="21" fill="#fff" stroke="#2b579a" stroke-width="1.3"/><path d="M19 9H27M19 12H27M19 15H27M19 18H27M19 21H27" stroke="#2b579a" stroke-width="1.3"/><path d="M3.5 10 L5.8 21 L8.5 13.5 L11 21 L13.5 10" fill="none" stroke="#fff" stroke-width="2"/></svg>
<svg style="left:189px;top:733px;" width="32" height="31" viewBox="0 0 32 31"><path d="M1 4 L18 1 V30 L1 27Z" fill="#d24726"/><rect x="17" y="5" width="13" height="21" fill="#fff" stroke="#d24726" stroke-width="1.3"/><path d="M23.5 8.5 A4.5 4.5 0 1 1 19 13 H23.5Z" fill="#d24726"/><path d="M24.5 7.5 A4.5 4.5 0 0 1 29 12 H24.5Z" fill="#d24726"/><path d="M20 19.5H28M20 22.5H28" stroke="#d24726" stroke-width="1.3"/><path d="M5.5 22 V9.5 H9.5 A3.5 3.5 0 0 1 9.5 16.5 H5.5" fill="none" stroke="#fff" stroke-width="2.3"/></svg>
<svg style="left:251px;top:733px;" width="32" height="31" viewBox="0 0 32 31"><path d="M1 4 L18 1 V30 L1 27Z" fill="#1e7145"/><rect x="17" y="5" width="13" height="21" fill="#fff" stroke="#1e7145" stroke-width="1.3"/><path d="M19 9H28M19 12H28M19 15H28M19 18H28M19 21H28M23 7V24" stroke="#1e7145" stroke-width="1.2"/><path d="M4.5 10 L12 21 M12 10 L4.5 21" stroke="#fff" stroke-width="2.3"/></svg>
<svg style="left:312px;top:734px;" width="33" height="31" viewBox="0 0 33 31"><path d="M1 5 H12 L14 3 H22 L23 6 H31 V29 H1Z" fill="#f2d794" stroke="#d8b45c" stroke-width="0.8"/><rect x="4" y="4" width="25" height="7" fill="#fff"/><rect x="6" y="4.5" width="3" height="2" fill="#2db34a"/><rect x="13" y="6" width="3" height="2" fill="#d9382c"/><rect x="20" y="8" width="3" height="2" fill="#3b82d8"/><path d="M1 10 H31 V29 H1Z" fill="#f5e2a8" stroke="#d8b45c" stroke-width="0.8"/><path d="M5 30 V18 H26 V30 H21 V23 H10 V30Z" fill="#8fd0f2" stroke="#3e9ad2" stroke-width="0.9"/></svg>
<svg style="left:374px;top:736px;" width="34" height="27" viewBox="0 0 34 27"><path d="M3 1.5 H31 L33 4 V8.5 H3 Q1 5 3 1.5Z" fill="#9b3f97" stroke="#222" stroke-width="0.9"/><path d="M3 9.5 H31 L33 11.5 V16 H3 Q1 12.7 3 9.5Z" fill="#2e4fe0" stroke="#222" stroke-width="0.9"/><path d="M3 17 H31 L33 19 V24.5 H3 Q1 20.7 3 17Z" fill="#23a12c" stroke="#222" stroke-width="0.9"/><path d="M3.5 3 H8 M3.5 11 H8 M3.5 18.5 H8" stroke="#eee" stroke-width="1.5"/><path d="M15 1 L20 1 L21 25 L16.5 25Z" fill="#b07a3a" stroke="#5a3a14" stroke-width="0.6"/><rect x="16" y="9" width="5.5" height="6" fill="#e8e8e8" stroke="#333" stroke-width="0.8"/><path d="M4 8.5 H12 M4 16 H12" stroke="#d9b84a" stroke-width="0.8"/></svg>
<svg style="left:436px;top:731px;" width="33" height="34" viewBox="0 0 33 34"><path d="M16.5 1 L32 8 L16.5 15 L1 8Z" fill="#6aa842"/><path d="M1 8 L16.5 15 V33 L1 26Z" fill="#80593a"/><path d="M32 8 L16.5 15 V33 L32 26Z" fill="#604029"/><path d="M1 8 L16.5 15 L32 8 V12 L16.5 19 L1 12Z" fill="#55902f"/><path d="M5 10 h2 v2 h-2z M22 11 h2 v3 h-2z M8 4 h3 v2 h-3z M20 5 h2 v2 h-2z" fill="#8bc45e"/><path d="M4 17 h2 v2 h-2z M9 22 h2 v2 h-2z M12 18 h2 v2 h-2z M20 20 h2 v2 h-2z M26 16 h2 v2 h-2z M24 25 h2 v2 h-2z M6 25 h2 v2 h-2z" fill="#5a4030"/><path d="M3 21 h2 v2 h-2z M27 22 h2 v2 h-2z M19 27 h2 v2 h-2z" fill="#9a7a5a"/></svg>
<svg style="left:1166px;top:746px;" width="10" height="6" viewBox="0 0 10 6"><path d="M0.5 5 L4.5 1 L8.5 5Z" fill="#fff"/></svg>
<svg style="left:1186px;top:740px;" width="18" height="17" viewBox="0 0 18 17"><path d="M1 1.8 L7.3 1 V7.5 H1Z M8.7 0.8 L16 0 V7.5 H8.7Z M1 9 H7.3 V15.5 L1 14.7Z M8.7 9 H16 V16.5 L8.7 15.7Z" fill="#fff"/></svg>
<svg style="left:1217px;top:741px;" width="11" height="16" viewBox="0 0 11 16"><rect x="1.5" y="2" width="8" height="13" rx="1" fill="none" stroke="#fff" stroke-width="1.3"/><rect x="3.5" y="0.5" width="4" height="2" fill="#fff"/><rect x="3" y="9" width="5" height="4.8" fill="#fff"/></svg>
<svg style="left:1235px;top:743px;" width="16" height="12" viewBox="0 0 16 12"><path d="M1 9H3V11H1Z M4 7H6V11H4Z M7 5H9V11H7Z M10 3H12V11H10Z M13 1H15V11H13Z" fill="#fff"/></svg>
<svg style="left:1258px;top:740px;" width="17" height="17" viewBox="0 0 17 17"><path d="M1 6H4.5L8.5 2V15L4.5 11H1Z" fill="#fff"/><path d="M10.5 5.5 Q12.5 8.5 10.5 11.5 M12.8 3.5 Q16 8.5 12.8 13.5" fill="none" stroke="#fff" stroke-width="1.2"/></svg>
<div class="t" style="left:1308px;top:734px;font-size:12px;color:#fff;transform:scaleX(0.858);">17:11</div>
<div class="t" style="left:1294px;top:752px;font-size:12px;color:#fff;transform:scaleX(0.896);">11.06.2015</div>
<!-- p5 -->
<div class="a" style="left:565px;top:107px;width:184px;height:379px;background:#fff;border:1px solid #c6c6c6;box-shadow:1px 1px 2px rgba(0,0,0,0.12)"></div>
<div class="t" style="left:598px;top:115px;font-size:12px;color:#444;transform:scaleX(0.982);">Auss<u>c</u>hneiden</div>
<div class="t" style="left:598px;top:139px;font-size:12px;color:#444;transform:scaleX(0.974);">K<u>o</u>pieren</div>
<div class="t" style="left:598px;top:218px;font-size:12px;color:#b0b0b0;transform:scaleX(0.983);">Bild bearbei<u>t</u>en</div>
<div class="t" style="left:598px;top:242px;font-size:12px;color:#444;transform:scaleX(0.963);"><u>A</u>ls Grafik speichern...</div>
<div class="t" style="left:598px;top:266px;font-size:12px;color:#444;transform:scaleX(0.972);">Bild <u>ä</u>ndern...</div>
<div class="t" style="left:598px;top:292px;font-size:12px;color:#b0b0b0;transform:scaleX(0.971);">Grupp<u>i</u>eren</div>
<div class="t" style="left:598px;top:316px;font-size:12px;color:#b0b0b0;">In d<u>e</u>n Vordergrund</div>
<div class="t" style="left:598px;top:339px;font-size:12px;color:#b0b0b0;transform:scaleX(1.012);">In den Hin<u>t</u>ergrund</div>
<div class="t" style="left:598px;top:366px;font-size:12px;color:#444;transform:scaleX(0.968);">Lin<u>k</u>...</div>
<div class="t" style="left:598px;top:392px;font-size:12px;color:#444;">Beschriftu<u>n</u>g einfügen...</div>
<div class="t" style="left:598px;top:416px;font-size:12px;color:#444;transform:scaleX(1.014);">Zeilenu<u>m</u>bruch</div>
<div class="t" style="left:598px;top:442px;font-size:12px;color:#444;transform:scaleX(0.975);">Größe und Po<u>s</u>ition...</div>
<div class="t" style="left:598px;top:466px;font-size:12px;color:#444;transform:scaleX(0.986);">Grafik f<u>o</u>rmatieren...</div>
<div class="a" style="left:591px;top:157px;width:156px;height:23px;background:#eeeeee;"></div>
<div class="t" style="left:599px;top:163px;font-size:12px;color:#444;font-weight:700;transform:scaleX(0.963);">Einfügeoptionen:</div>
<div class="a" style="left:599px;top:210px;width:148px;height:1px;background:#e1e1e1;"></div>
<div class="a" style="left:599px;top:284px;width:148px;height:1px;background:#e1e1e1;"></div>
<div class="a" style="left:599px;top:358px;width:148px;height:1px;background:#e1e1e1;"></div>
<div class="a" style="left:599px;top:384px;width:148px;height:1px;background:#e1e1e1;"></div>
<div class="a" style="left:599px;top:434px;width:148px;height:1px;background:#e1e1e1;"></div>
<svg style="left:734px;top:294px;" width="6" height="9" viewBox="0 0 6 9"><path d="M1 0.5 L5 4.5 L1 8.5 Z" fill="#c0c0c0"/></svg>
<svg style="left:734px;top:317px;" width="6" height="9" viewBox="0 0 6 9"><path d="M1 0.5 L5 4.5 L1 8.5 Z" fill="#c0c0c0"/></svg>
<svg style="left:734px;top:341px;" width="6" height="9" viewBox="0 0 6 9"><path d="M1 0.5 L5 4.5 L1 8.5 Z" fill="#c0c0c0"/></svg>
<svg style="left:734px;top:417px;" width="6" height="9" viewBox="0 0 6 9"><path d="M1 0.5 L5 4.5 L1 8.5 Z" fill="#555"/></svg>
<div class="a" style="left:724px;top:319px;width:1px;height:13px;background:#e1e1e1;"></div>
<div class="a" style="left:724px;top:343px;width:1px;height:13px;background:#e1e1e1;"></div>
<svg style="left:571px;top:113px;" width="17" height="17" viewBox="0 0 17 17"><path d="M3.5 1 L10.5 9.5 M11 1 L4 9.5" stroke="#6a6a6a" stroke-width="1.6"/><circle cx="4" cy="12" r="2.7" fill="none" stroke="#2e6db4" stroke-width="1.2"/><circle cx="11" cy="12" r="2.7" fill="none" stroke="#2e6db4" stroke-width="1.2"/></svg>
<svg style="left:570px;top:136px;" width="18" height="17" viewBox="0 0 18 17"><path d="M1.5 1.5H7L9 3.5V11.5H1.5Z" fill="#fff" stroke="#6a6a6a"/><path d="M3 4.5H5.5M3 6.5H5.5M3 8.5H5.5" stroke="#2e6db4"/><path d="M7.5 5.5H13.5L16 8V15.5H7.5Z" fill="#fff" stroke="#6a6a6a"/><path d="M9.5 9.5H14M9.5 11.5H14M9.5 13.5H14" stroke="#2e6db4"/></svg>
<svg style="left:571px;top:159px;" width="20" height="22" viewBox="0 0 20 22"><g transform="scale(0.78)"><rect x="1" y="3" width="15" height="17" rx="1" fill="#e4b56a"/><rect x="4" y="2.5" width="9" height="3" fill="#fff"/><rect x="4.5" y="3" width="8" height="2.5" fill="#6d6d6d"/><rect x="7" y="0.5" width="3.5" height="3" rx="0.8" fill="#6d6d6d"/><path d="M9.5 9.5H16L19.5 13V22.5H9.5Z" fill="#fff" stroke="#6a6a6a"/><path d="M16 9.5V13H19.5" fill="none" stroke="#6a6a6a"/></g></svg>
<svg style="left:597px;top:183px;" width="27" height="29" viewBox="0 0 27 29"><g transform="scale(1.05)"><rect x="1" y="3" width="15" height="17" rx="1" fill="#e4b56a"/><rect x="4" y="2.5" width="9" height="3" fill="#fff"/><rect x="4.5" y="3" width="8" height="2.5" fill="#6d6d6d"/><rect x="7" y="0.5" width="3.5" height="3" rx="0.8" fill="#6d6d6d"/><path d="M9.5 9.5H16L19.5 13V22.5H9.5Z" fill="#fff" stroke="#6a6a6a"/><path d="M16 9.5V13H19.5" fill="none" stroke="#6a6a6a"/></g></svg>
<svg style="left:570px;top:263px;" width="18" height="18" viewBox="0 0 18 18"><rect x="1.5" y="1.5" width="9" height="8" fill="#fff" stroke="#555"/><path d="M2 9 Q5 4 10 5 V9 Z" fill="#5a9d6a"/><path d="M2 6 Q5 3 10 3.5" stroke="#5fa0d8" fill="none"/><rect x="7.5" y="7.5" width="9.5" height="9" fill="#fff" stroke="#555"/><path d="M9 15.5 L12 11.5 L15.5 15.5 Z" fill="#2e6db4"/><circle cx="14.5" cy="10" r="1" fill="#f0a830"/><path d="M2.5 10 Q1 14 5.5 14.5" fill="none" stroke="#2e6db4" stroke-width="1.3"/><path d="M4.5 12.5 L6.8 14.5 L4.5 16.5" fill="none" stroke="#2e6db4" stroke-width="1.1"/></svg>
<svg style="left:570px;top:289px;" width="18" height="17" viewBox="0 0 18 17"><rect x="1" y="1" width="3" height="3" fill="#b4b4b4"/><rect x="14" y="1" width="3" height="3" fill="#b4b4b4"/><rect x="1" y="13" width="3" height="3" fill="#b4b4b4"/><rect x="14" y="13" width="3" height="3" fill="#b4b4b4"/><rect x="4.5" y="4.5" width="6" height="5" fill="none" stroke="#c4c4c4"/><rect x="7.5" y="7.5" width="6" height="5" fill="#ece6ec" stroke="#c4c4c4"/></svg>
<svg style="left:570px;top:313px;" width="18" height="17" viewBox="0 0 18 17"><path d="M1.5 6V1.5H6" fill="none" stroke="#b8b8b8" stroke-width="1.1"/><rect x="4" y="4" width="9" height="9" fill="#d8d5d8"/><path d="M16.5 11V15.5H12" fill="none" stroke="#b8b8b8" stroke-width="1.1"/></svg>
<svg style="left:570px;top:337px;" width="18" height="17" viewBox="0 0 18 17"><rect x="1.5" y="1.5" width="5" height="5" fill="#fff" stroke="#b8b8b8"/><rect x="4" y="4" width="8" height="8" fill="#d8d5d8"/><rect x="10.5" y="10.5" width="5.5" height="5.5" fill="#fff" stroke="#b8b8b8"/></svg>
<svg style="left:570px;top:363px;" width="18" height="18" viewBox="0 0 18 18"><path d="M1.5 9 A6 6 0 0 1 13.5 9 Z" fill="#fff" stroke="#6a6a6a"/><path d="M7.5 3V9M2 6.3H13M5 3.5 Q3.8 6 4.3 9M10 3.5 Q11.2 6 10.7 9" fill="none" stroke="#6a6a6a" stroke-width="0.9"/><rect x="2" y="10" width="8.5" height="5.5" rx="2.7" fill="none" stroke="#2e6db4" stroke-width="2"/><rect x="8" y="10" width="8.5" height="5.5" rx="2.7" fill="none" stroke="#2e6db4" stroke-width="2"/></svg>
<svg style="left:571px;top:389px;" width="16" height="18" viewBox="0 0 16 18"><rect x="1.5" y="1.5" width="13.5" height="15" fill="#fff" stroke="#6a6a6a"/><rect x="3.5" y="4" width="6" height="5.5" fill="#fff" stroke="#6a6a6a" stroke-width="0.9"/><path d="M3.5 12.5H10" stroke="#d24726" stroke-width="1" stroke-dasharray="1 1 6"/></svg>
<svg style="left:570px;top:413px;" width="18" height="18" viewBox="0 0 18 18"><path d="M1.5 2.5H16M1.5 5.5H16M1.5 14.5H16M1.5 17H16" stroke="#2e6db4" stroke-width="1.1"/><path d="M1.5 8.5H3.5M1.5 11.5H3.5M14 8.5H16M14 11.5H16" stroke="#2e6db4" stroke-width="1.1"/><path d="M5.5 12 A3.3 3.3 0 0 1 12 12" fill="none" stroke="#6a6a6a" stroke-width="2.2"/></svg>
<svg style="left:570px;top:440px;" width="18" height="16" viewBox="0 0 18 16"><path d="M2 3.3H16.5M2 13.6H16.5" stroke="#8a8a8a" stroke-width="1"/><path d="M2 7.5H5M2 9.5H5M15 7.5H16.5M15 9.5H16.5" stroke="#b8b8b8" stroke-width="0.9"/><rect x="6.5" y="5.3" width="7.2" height="6.5" fill="#fff" stroke="#2e6db4" stroke-width="1.1"/><circle cx="6.5" cy="4" r="0.9" fill="#555"/><circle cx="13.7" cy="4" r="0.9" fill="#555"/><circle cx="6.5" cy="12.5" r="0.9" fill="#555"/><circle cx="13.7" cy="12.5" r="0.9" fill="#555"/></svg>
<svg style="left:570px;top:463px;" width="19" height="19" viewBox="0 0 19 19"><path d="M1.5 8.5 L7 3.5 L11.5 8 L6 13 Z" fill="#fff" stroke="#444" stroke-width="1"/><path d="M5.5 7V1.5H7.5V4.5" fill="none" stroke="#444" stroke-width="0.9"/><path d="M10 2.5 Q14 3.5 12 8.5 Q11 6 10 2.5Z" fill="#2e6db4"/><path d="M5 17 Q8 11 12 12 Q14 13.5 12 16 Q9.5 17.5 5 17Z" fill="#2e6db4"/><path d="M12.5 12 L17.5 6" stroke="#6a6a6a" stroke-width="2"/></svg>
<div class="a" style="left:565px;top:501px;width:166px;height:63px;background:#fff;border:1px solid #c6c6c6;box-shadow:1px 1px 2px rgba(0,0,0,0.12)"></div>
<svg style="left:599px;top:509px;" width="32" height="25" viewBox="0 0 32 25"><path d="M12 20.5H1.5V1.5H20.5V7 M20.5 15V20.5H18" fill="none" stroke="#6a6a6a" stroke-width="1.1"/><path d="M2 17 L2 13 L7 8.5 L12 12.5 L12 19 Z" fill="#c5d8ef"/><circle cx="15.5" cy="8" r="2" fill="#f0c070"/><path d="M7 24 Q9 19 13 18 Q16 17.5 15.5 20.5 Q14 24 7 24Z" fill="#2e6db4"/><path d="M13.5 19 L21.5 9" stroke="#666" stroke-width="2.6"/><path d="M23.3 12.5H28L25.6 15Z" fill="#666"/></svg>
<div class="t" style="left:573px;top:539px;font-size:12px;color:#444;transform:scaleX(0.957);">Formatvorlage</div>
<svg style="left:679px;top:509px;" width="21" height="21" viewBox="0 0 21 21"><path d="M6.4 6V19.7 M1 14.3H14.6 M13.6 2V15.7 M5 7.5H18.7" fill="none" stroke="#666" stroke-width="2.8"/></svg>
<div class="t" style="left:656px;top:539px;font-size:12px;color:#444;transform:scaleX(0.946);">Zuschneiden</div>
</body></html>
